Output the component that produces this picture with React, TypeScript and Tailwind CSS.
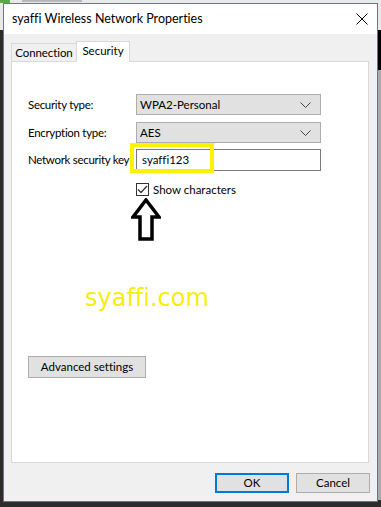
import React from "react";

const ui = { fontFamily: 'Lato, "Noto Sans", sans-serif', fontVariantLigatures: "none" as const };

function Chevron() {
	return (
		<svg width="11" height="6" viewBox="0 0 11 6" className="shrink-0">
			<polyline points="0.5,0.5 5.5,5.5 10.5,0.5" fill="none" stroke="#444" strokeWidth="1" />
		</svg>
	);
}

function Combo({ value }: { value: string }) {
	return (
		<div className="flex h-[21px] w-[185px] items-center justify-between border border-[#adadad] bg-[#e1e1e1] pl-[3px] pr-[9px] text-[11.5px] text-black">
			<span>{value}</span>
			<Chevron />
		</div>
	);
}

function Row({ label, children }: { label: string; children: React.ReactNode }) {
	return (
		<div className="flex items-center">
			<span className="w-[108px] whitespace-nowrap text-[11.5px] tracking-[-0.3px] text-black">{label}</span>
			{children}
		</div>
	);
}

function UpArrow() {
	return (
		<svg width="30" height="44" viewBox="0 0 30 44">
			<polygon
				points="15,2 28,19 21,19 21,41 9,41 9,19 2,19"
				fill="white"
				stroke="black"
				strokeWidth="3.5"
				strokeLinejoin="miter"
			/>
		</svg>
	);
}

export default function App() {
	return (
		<div className="relative h-[507px] w-[381px] overflow-hidden bg-[#2e2c2b]" style={ui}>
			{/* window behind */}
			<div className="absolute left-0 top-0 h-[30px] w-[381px] bg-[#e9e9e9]">
				<div className="absolute left-0 top-0 h-[3px] w-[10px] bg-[#5aa84a]" />
				<div className="absolute left-[22px] top-0 h-[2px] w-[60px] bg-[#b8b8b8]" />
			</div>
			<div className="absolute right-0 top-[30px] h-[40px] w-[6px] bg-black" />
			<div className="absolute right-0 top-[70px] h-[430px] w-[6px] bg-[#a9a9a9]" />

			<div className="relative ml-[3px] mt-[3px] flex h-[499px] w-[375px] flex-col border border-[#1b9e8b] bg-[#f0f0f0]">
				{/* title bar */}
				<div className="flex h-[30px] shrink-0 items-center justify-between bg-white pl-[8px] pr-[9px]">
					<span className="text-[12.5px] text-black">syaffi Wireless Network Properties</span>
					<svg width="12" height="12" viewBox="0 0 12 12">
						<path d="M0.5 0.5 L11.5 11.5 M11.5 0.5 L0.5 11.5" stroke="black" strokeWidth="1" />
					</svg>
				</div>

				{/* tabs */}
				<div className="mt-[7px] flex items-end pl-[7px]">
					<div className="-mr-px flex h-[18px] w-[66px] items-center justify-center border border-b-0 border-[#d9d9d9] bg-[#f0f0f0] text-[11.5px] tracking-[-0.1px] text-black">
						Connection
					</div>
					<div className="relative z-10 -mb-px flex h-[21px] w-[54px] items-center justify-center border border-b-0 border-[#d9d9d9] bg-white pb-[2px] text-[11.5px] text-black">
						Security
					</div>
				</div>

				{/* panel */}
				<div className="relative ml-[7px] flex h-[402px] w-[358px] flex-col border border-[#d9d9d9] bg-white pl-[16px] pt-[32px]">
					<div className="flex flex-col gap-[7px]">
						<Row label="Security type:">
							<Combo value="WPA2-Personal" />
						</Row>
						<Row label="Encryption type:">
							<Combo value="AES" />
						</Row>
						<div className="-mt-px">
							<Row label="Network security key">
								<div className="flex h-[22px] w-[185px] items-center border border-[#7a7a7a] bg-white pl-[5px] text-[11.5px] text-black">
									syaffi123
								</div>
							</Row>
						</div>
					</div>

					<div className="ml-[108px] mt-[10px] flex h-[17px] items-center gap-[4px]">
						<div className="flex h-[13px] w-[13px] items-center justify-center border border-[#333] bg-white">
							<svg width="11" height="9" viewBox="0 0 11 9">
								<polyline points="1,4.5 4,7.5 10,1" fill="none" stroke="#333" strokeWidth="1.3" />
							</svg>
						</div>
						<span className="text-[11.5px] text-black">Show characters</span>
					</div>

					<div className="ml-[103px]">
						<UpArrow />
					</div>

					<div className="ml-[57px] mt-[44px] text-[24px] leading-none text-[#f7ee0a]" style={{ fontFamily: '"DejaVu Sans", Verdana, sans-serif' }}>
						syaffi.com
					</div>

					<button className="mt-[46px] flex h-[22px] w-[118px] items-center justify-center border border-[#adadad] bg-[#e1e1e1] text-[11.5px] text-black">
						Advanced settings
					</button>

					{/* highlight box */}
					<div className="absolute left-[118px] top-[81px] h-[30px] w-[84px] border-[4px] border-[#fff200]" />
				</div>

				{/* footer */}
				<div className="mt-[10px] flex justify-end gap-[7px] pr-[7px]">
					<button className="flex h-[20px] w-[74px] items-center justify-center border-2 border-[#0078d7] bg-[#e1e1e1] text-[11.5px] text-black">
						OK
					</button>
					<button className="flex h-[20px] w-[74px] items-center justify-center border border-[#adadad] bg-[#e1e1e1] text-[11.5px] text-black">
						Cancel
					</button>
				</div>
			</div>
		</div>
	);
}
